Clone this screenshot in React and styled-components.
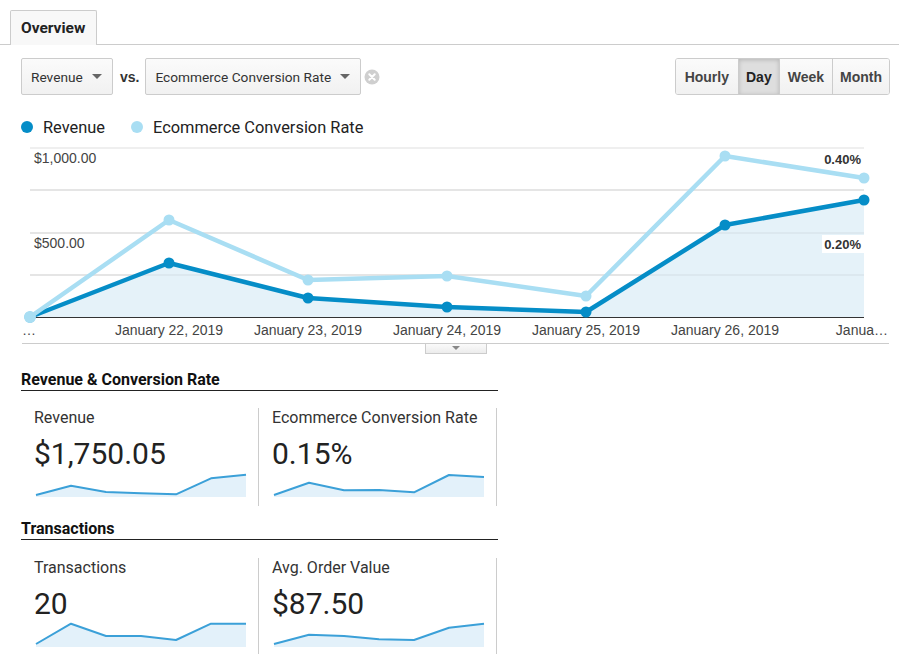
import React from "react";
import styled, { createGlobalStyle } from "styled-components";

const Global = createGlobalStyle`
  html, body { margin: 0; padding: 0; background: #fff; }
  body { font-family: Roboto, "Liberation Sans", Arial, sans-serif; color: #222; }
  * { box-sizing: border-box; }
`;

const Page = styled.div`
  width: 899px;
  height: 654px;
  overflow: hidden;
`;

const TabBar = styled.div`
  display: flex;
  padding: 10px 0 0 10px;
  border-bottom: 1px solid #ccc;
  height: 45px;
`;

const Tab = styled.div`
  height: 35px;
  padding: 0 11px 0 10px;
  display: flex;
  align-items: center;
  background: #f8f8f8;
  border: 1px solid #ccc;
  border-bottom: none;
  border-radius: 2px 2px 0 0;
  font-weight: 700;
  font-size: 15.5px;
  color: #222;
  margin-bottom: -1px;
`;

const Controls = styled.div`
  display: flex;
  align-items: center;
  justify-content: space-between;
  margin-top: 13px;
  padding: 0 9px 0 21px;
`;

const SelectGroup = styled.div`
  display: flex;
  align-items: center;
`;

const Select = styled.div`
  height: 37px;
  width: ${(p) => p.$w}px;
  display: flex;
  align-items: center;
  justify-content: space-between;
  padding: 0 10px 0 9px;
  border: 1px solid #ccc;
  border-radius: 2px;
  background: linear-gradient(#fbfbfb, #f1f1f1);
  font-size: 13.7px;
  color: #333;
`;

const Caret = styled.span`
  width: 0;
  height: 0;
  border-left: 5px solid transparent;
  border-right: 5px solid transparent;
  border-top: 5px solid #666;
`;

const Vs = styled.span`
  font-family: "Liberation Sans", Arial, sans-serif;
  font-weight: 700;
  font-size: 14px;
  color: #333;
  margin: 0 6px 0 7px;
`;

const ClearIcon = styled.svg`
  margin-left: 3px;
`;

const ButtonGroup = styled.div`
  display: flex;
  height: 37px;
  border: 1px solid #ccc;
  border-radius: 3px;
  overflow: hidden;
`;

const GroupButton = styled.div`
  display: flex;
  align-items: center;
  padding: 0 ${(p) => p.$pad}px;
  font-family: "Liberation Sans", Arial, sans-serif;
  font-weight: 700;
  font-size: 14px;
  color: ${(p) => (p.$active ? "#222" : "#444")};
  background: ${(p) => (p.$active ? "#dedede" : "linear-gradient(#fbfbfb, #f1f1f1)")};
  box-shadow: ${(p) => (p.$active ? "inset 0 1px 4px rgba(0,0,0,0.18)" : "none")};
  & + & {
    border-left: 1px solid #ccc;
  }
`;

const Legend = styled.div`
  display: flex;
  align-items: center;
  height: 20px;
  margin-top: 22px;
  padding-left: 21px;
  gap: 26px;
`;

const LegendItem = styled.div`
  display: flex;
  align-items: center;
  font-size: 16.4px;
  color: #222;
  gap: 10px;
`;

const Dot = styled.span`
  width: 12px;
  height: 12px;
  border-radius: 50%;
  background: ${(p) => p.$color};
`;

const ChartSvg = styled.svg`
  display: block;
  margin-top: 3px;
`;

const Handle = styled.div`
  width: 62px;
  height: 10px;
  margin-left: 425px;
  border: 1px solid #ccc;
  border-top: none;
  background: linear-gradient(#fafafa, #ececec);
  display: flex;
  justify-content: center;
  padding-top: 2px;
`;

const HandleCaret = styled.span`
  width: 0;
  height: 0;
  border-left: 4px solid transparent;
  border-right: 4px solid transparent;
  border-top: 4px solid #888;
`;

const Section = styled.div`
  margin-left: 21px;
  width: 477px;
  margin-top: ${(p) => p.$top}px;
`;

const SectionTitle = styled.div`
  font-size: 16px;
  font-weight: 700;
  line-height: 18px;
  color: #111;
  padding-bottom: 1px;
  border-bottom: 1px solid #222;
`;

const Cards = styled.div`
  display: flex;
  margin-top: ${(p) => p.$gap}px;
`;

const Card = styled.div`
  width: 238px;
  height: 98px;
  padding: 0 0 0 13px;
  border-right: 1px solid #ccc;
  display: flex;
  flex-direction: column;
`;

const CardLabel = styled.div`
  font-size: 16px;
  line-height: 20px;
  color: #333;
`;

const CardValue = styled.div`
  font-size: 30px;
  line-height: 36px;
  margin-top: 8px;
  color: #222;
`;

const Spark = styled.svg`
  display: block;
  margin-left: 1px;
`;

const X = [30, 169, 308, 447, 586, 725, 864];
const DARK = [317, 263, 298, 307, 312, 225, 200];
const LIGHT = [317, 220, 280, 276, 296, 156, 178];
const OFF = 140;

function pts(ys) {
  return X.map((x, i) => `${x},${ys[i] - OFF}`).join(" ");
}

const labels = [
  "January 22, 2019",
  "January 23, 2019",
  "January 24, 2019",
  "January 25, 2019",
  "January 26, 2019",
];

function MainChart() {
  const base = 317 - OFF;
  const area = `30,${base} ${pts(DARK)} 864,${base}`;
  const axisFont = { fontFamily: "'Liberation Sans', Arial, sans-serif", fontSize: 14, fill: "#444" };
  const boldFont = { fontFamily: "'Liberation Sans', Arial, sans-serif", fontSize: 13, fontWeight: 700, fill: "#333" };
  return (
    <ChartSvg width="899" height="204" viewBox="0 0 899 204">
      {[148, 190, 233, 275].map((y) => (
        <line key={y} x1="30" x2="864" y1={y - OFF} y2={y - OFF} stroke="#efefef" strokeWidth="2" />
      ))}
      <polygon points={area} fill="#e5f2f9" />
      {[190, 233, 275].map((y) => (
        <line key={"o" + y} x1="30" x2="864" y1={y - OFF} y2={y - OFF} stroke="rgba(0,0,0,0.04)" strokeWidth="2" />
      ))}
      <line x1="30" x2="864" y1={base + 0.5} y2={base + 0.5} stroke="#333" strokeWidth="1" />
      <text x="34" y={163 - OFF} style={axisFont}>$1,000.00</text>
      <text x="34" y={248 - OFF} style={axisFont}>$500.00</text>
      <text x="861" y={164 - OFF} textAnchor="end" style={boldFont}>0.40%</text>
      <rect x="822" y={235 - OFF} width="42" height="18" fill="#fff" />
      <text x="861" y={249 - OFF} textAnchor="end" style={boldFont}>0.20%</text>
      <polyline points={pts(DARK)} fill="none" stroke="#058dc7" strokeWidth="4.5" strokeLinejoin="round" />
      {X.map((x, i) => (
        <circle key={"d" + i} cx={x} cy={DARK[i] - OFF} r="5.5" fill="#058dc7" />
      ))}
      <polyline points={pts(LIGHT)} fill="none" stroke="#a9def3" strokeWidth="4.5" strokeLinejoin="round" />
      {X.map((x, i) => (
        <circle key={"l" + i} cx={x} cy={LIGHT[i] - OFF} r={i === 0 ? 6 : 5.5} fill="#a9def3" />
      ))}
      <text x="22" y={335 - OFF} style={axisFont}>…</text>
      {labels.map((l, i) => (
        <text key={l} x={X[i + 1]} y={335 - OFF} textAnchor="middle" style={axisFont}>{l}</text>
      ))}
      <text x="888" y={335 - OFF} textAnchor="end" style={axisFont}>Janua…</text>
      <line x1="22" x2="889" y1={343 - OFF + 0.5} y2={343 - OFF + 0.5} stroke="#ccc" strokeWidth="1" />
    </ChartSvg>
  );
}

function Sparkline({ ys }) {
  const p = ys.map((y, i) => `${i * 35 + 1},${y + 1}`).join(" ");
  const a = `1,25 ${p} 211,25`;
  return (
    <Spark width="213" height="25" viewBox="0 0 213 25">
      <polygon points={a} fill="#e3f1fa" />
      <polyline points={p} fill="none" stroke="#3ba0d8" strokeWidth="2" strokeLinejoin="round" />
    </Spark>
  );
}

const sections = [
  {
    title: "Revenue & Conversion Rate",
    top: 17,
    gap: 17,
    cards: [
      { label: "Revenue", value: "$1,750.05", ys: [22, 12.7, 19, 20.3, 21.3, 5.3, 1.7] },
      { label: "Ecommerce Conversion Rate", value: "0.15%", ys: [22, 9.7, 17.3, 17, 19.3, 2, 4] },
    ],
  },
  {
    title: "Transactions",
    top: 14,
    gap: 18,
    cards: [
      { label: "Transactions", value: "20", ys: [21, 0.7, 13, 13, 17, 0.7, 0.7] },
      { label: "Avg. Order Value", value: "$87.50", ys: [21, 11.7, 13, 16.3, 17, 4.7, 0.7] },
    ],
  },
];

export default function App() {
  return (
    <Page>
      <Global />
      <TabBar>
        <Tab>Overview</Tab>
      </TabBar>
      <Controls>
        <SelectGroup>
          <Select $w={92}>
            Revenue
            <Caret />
          </Select>
          <Vs>vs.</Vs>
          <Select $w={216}>
            Ecommerce Conversion Rate
            <Caret />
          </Select>
          <ClearIcon width="16" height="16" viewBox="0 0 16 16">
            <circle cx="8" cy="8" r="7.5" fill="#cfcfcf" />
            <path d="M5.3 5.3 L10.7 10.7 M10.7 5.3 L5.3 10.7" stroke="#fff" strokeWidth="2" strokeLinecap="round" />
          </ClearIcon>
        </SelectGroup>
        <ButtonGroup>
          <GroupButton $pad={9}>Hourly</GroupButton>
          <GroupButton $pad={7} $active>Day</GroupButton>
          <GroupButton $pad={8}>Week</GroupButton>
          <GroupButton $pad={7}>Month</GroupButton>
        </ButtonGroup>
      </Controls>
      <Legend>
        <LegendItem>
          <Dot $color="#058dc7" />
          Revenue
        </LegendItem>
        <LegendItem>
          <Dot $color="#a9def3" />
          Ecommerce Conversion Rate
        </LegendItem>
      </Legend>
      <MainChart />
      <Handle>
        <HandleCaret />
      </Handle>
      {sections.map((s) => (
        <Section key={s.title} $top={s.top}>
          <SectionTitle>{s.title}</SectionTitle>
          <Cards $gap={s.gap}>
            {s.cards.map((c) => (
              <Card key={c.label}>
                <CardLabel>{c.label}</CardLabel>
                <CardValue>{c.value}</CardValue>
                <Sparkline ys={c.ys} />
              </Card>
            ))}
          </Cards>
        </Section>
      ))}
    </Page>
  );
}
